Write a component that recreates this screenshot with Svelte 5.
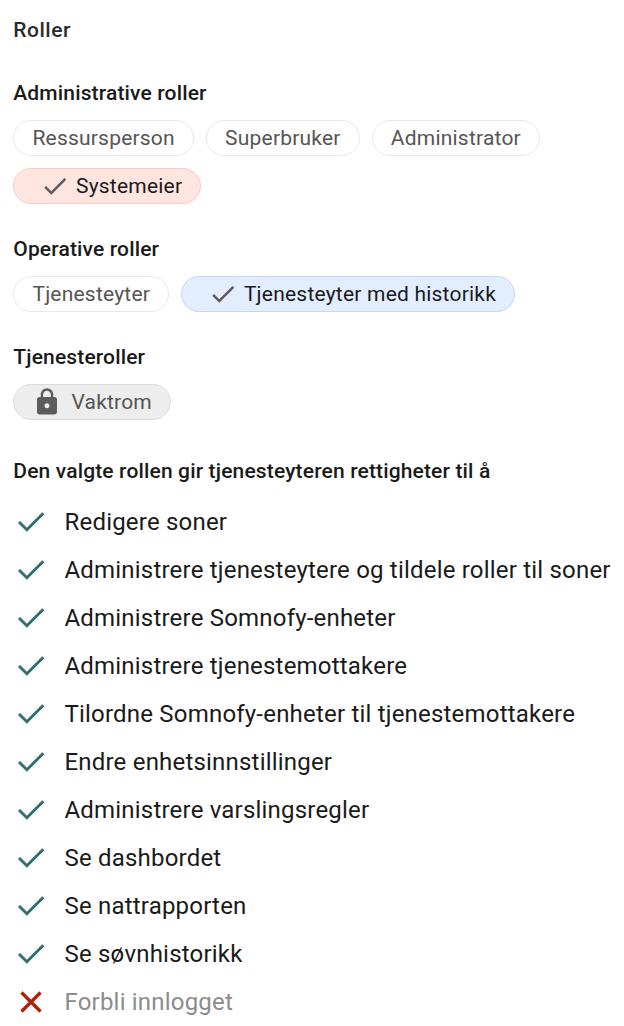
<script lang="ts">
  type Role = { name: string; state?: string };

  const groups: { title: string; roles: Role[] }[] = [
    {
      title: 'Administrative roller',
      roles: [
        { name: 'Ressursperson' },
        { name: 'Superbruker' },
        { name: 'Administrator' },
        { name: 'Systemeier', state: 'admin' }
      ]
    },
    {
      title: 'Operative roller',
      roles: [
        { name: 'Tjenesteyter' },
        { name: 'Tjenesteyter med historikk', state: 'operative' }
      ]
    },
    {
      title: 'Tjenesteroller',
      roles: [{ name: 'Vaktrom', state: 'locked' }]
    }
  ];

  const permissions = [
    { text: 'Redigere soner', allowed: true },
    { text: 'Administrere tjenesteytere og tildele roller til soner', allowed: true },
    { text: 'Administrere Somnofy-enheter', allowed: true },
    { text: 'Administrere tjenestemottakere', allowed: true },
    { text: 'Tilordne Somnofy-enheter til tjenestemottakere', allowed: true },
    { text: 'Endre enhetsinnstillinger', allowed: true },
    { text: 'Administrere varslingsregler', allowed: true },
    { text: 'Se dashbordet', allowed: true },
    { text: 'Se nattrapporten', allowed: true },
    { text: 'Se søvnhistorikk', allowed: true },
    { text: 'Forbli innlogget', allowed: false }
  ];
</script>

<div class="roles">
  <h1>Roller</h1>

  {#each groups as group}
    <section>
      <h2>{group.title}</h2>
      <div class="chips">
        {#each group.roles as role}
          <button type="button" class="chip {role.state ?? ''}">
            {#if role.state === 'locked'}
              <svg class="lock" viewBox="0 0 24 24">
                <path d="M18 8h-1V6c0-2.76-2.24-5-5-5S7 3.24 7 6v2H6c-1.1 0-2 .9-2 2v10c0 1.1.9 2 2 2h12c1.1 0 2-.9 2-2V10c0-1.1-.9-2-2-2zm-6 9c-1.1 0-2-.9-2-2s.9-2 2-2 2 .9 2 2-.9 2-2 2zm3.1-9H8.9V6c0-1.71 1.39-3.1 3.1-3.1s3.1 1.39 3.1 3.1v2z" />
              </svg>
            {:else if role.state}
              <svg class="tick" viewBox="0 0 24 24">
                <path d="M9 16.17L4.83 12l-1.42 1.41L9 19 21 7l-1.41-1.41z" />
              </svg>
            {/if}
            <span>{role.name}</span>
          </button>
        {/each}
      </div>
    </section>
  {/each}

  <h2 class="rights-title">Den valgte rollen gir tjenesteyteren rettigheter til å</h2>
  <ul>
    {#each permissions as permission}
      <li class:denied={!permission.allowed}>
        <svg viewBox="0 0 36 36">
          {#if permission.allowed}
            <path d="M6 18L13.8 25.8L30.3 9.3" />
          {:else}
            <path d="M8.5 8.5L27.5 27.5M27.5 8.5L8.5 27.5" />
          {/if}
        </svg>
        <span>{permission.text}</span>
      </li>
    {/each}
  </ul>
</div>

<style>
  :global(body) {
    background: #fff;
  }

  .roles {
    box-sizing: border-box;
    height: 1026px;
    padding: 18px 0 0 13.3px;
    overflow: hidden;
    font-family: Roboto, sans-serif;
    color: #1a1a1a;
  }

  h1,
  h2 {
    margin: 0;
    font-size: 21px;
    font-weight: 500;
    line-height: 24px;
    letter-spacing: 0.15px;
  }

  h1 {
    margin-bottom: 39px;
    color: #2b2b2b;
    letter-spacing: 0.5px;
  }

  section {
    margin-bottom: 33px;
  }

  .chips {
    display: flex;
    flex-wrap: wrap;
    gap: 12px;
    margin-top: 15px;
  }

  .chip {
    display: flex;
    align-items: center;
    box-sizing: border-box;
    height: 36px;
    padding: 0 18.1px;
    border: 1px solid #e8e8e8;
    border-radius: 18px;
    background: #fff;
    color: #555;
    font-family: inherit;
    font-size: 21px;
    line-height: 24px;
    letter-spacing: 0.21px;
    white-space: nowrap;
  }

  .chip svg {
    flex: none;
    fill: #5c5c5c;
  }

  .tick {
    width: 30px;
    height: 30px;
    margin: 0 6.2px 0 7.4px;
  }

  .lock {
    width: 30px;
    height: 30px;
    margin-right: 9px;
  }

  .admin {
    border-color: #ffc9c0;
    background: #ffe5e0;
    color: #1a1a1a;
  }

  .operative {
    border-color: #c0d8f8;
    background: #e2edff;
    color: #1a1a1a;
  }

  .locked {
    border-color: #ddd;
    background: #ededed;
  }

  .rights-title {
    margin-top: 39px;
  }

  ul {
    margin: 15px 0 0;
    padding: 0;
    list-style: none;
  }

  li {
    display: flex;
    align-items: center;
    height: 48px;
    font-size: 24px;
    letter-spacing: 0.2px;
    white-space: nowrap;
  }

  li svg {
    width: 36px;
    height: 36px;
    margin-right: 15.2px;
    fill: none;
    stroke: #306e70;
    stroke-width: 2.9;
  }

  .denied {
    color: #8c8c8c;
  }

  .denied svg {
    stroke: #b71c00;
    stroke-width: 3.2;
  }
</style>
